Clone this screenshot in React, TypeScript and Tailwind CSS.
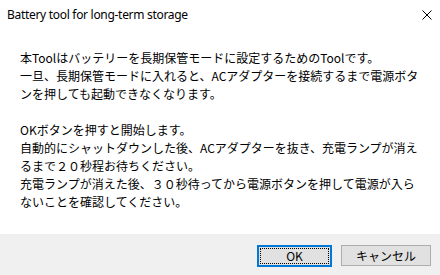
import React from "react";

const jp = { fontFamily: '"Noto Sans CJK JP", "Noto Sans", sans-serif' };

export default function App() {
  const p1 = [
    "本Toolはバッテリーを長期保管モードに設定するためのToolです。",
    "一旦、長期保管モードに入れると、ACアダプターを接続するまで電源ボタ",
    "ンを押しても起動できなくなります。",
  ];
  const p2 = [
    "OKボタンを押すと開始します。",
    "自動的にシャットダウンした後、ACアダプターを抜き、充電ランプが消え",
    "るまで２０秒程お待ちください。",
    "充電ランプが消えた後、３０秒待ってから電源ボタンを押して電源が入ら",
    "ないことを確認してください。",
  ];
  return (
    <div className="w-[440px] h-[275px] bg-white flex flex-col overflow-hidden text-black">
      <div className="h-[30px] flex items-center justify-between pl-[7px] pr-[8px]">
        <span className="text-[12px] font-['Noto_Sans',sans-serif] tracking-[-0.3px]">
          Battery tool for long-term storage
        </span>
        <svg width="10" height="10" viewBox="0 0 10 10">
          <path d="M0.5 0.5 L9.5 9.5 M9.5 0.5 L0.5 9.5" stroke="#000" strokeWidth="1" />
        </svg>
      </div>
      <div className="flex-1 pl-[20px] pt-[19px] text-[12px] leading-[18px]" style={jp}>
        <div className="flex flex-col">
          {p1.map((l) => (
            <div key={l} className="whitespace-nowrap">{l}</div>
          ))}
        </div>
        <div className="flex flex-col mt-[18px]">
          {p2.map((l) => (
            <div key={l} className="whitespace-nowrap">{l}</div>
          ))}
        </div>
      </div>
      <div className="h-[41px] bg-[#f0f0f0] flex items-start justify-end gap-[9px] pt-[11px] pr-[9px]">
        <button className="w-[75px] h-[22px] border-2 border-[#0078d7] bg-[#e1e1e1] p-[1px] flex">
          <span
            className="flex-1 border border-dotted border-black flex items-center justify-center text-[12px] leading-none"
            style={jp}
          >
            OK
          </span>
        </button>
        <button
          className="w-[90px] h-[21px] border border-[#adadad] bg-[#e1e1e1] flex items-center justify-center text-[12px] leading-none"
          style={jp}
        >
          キャンセル
        </button>
      </div>
    </div>
  );
}
